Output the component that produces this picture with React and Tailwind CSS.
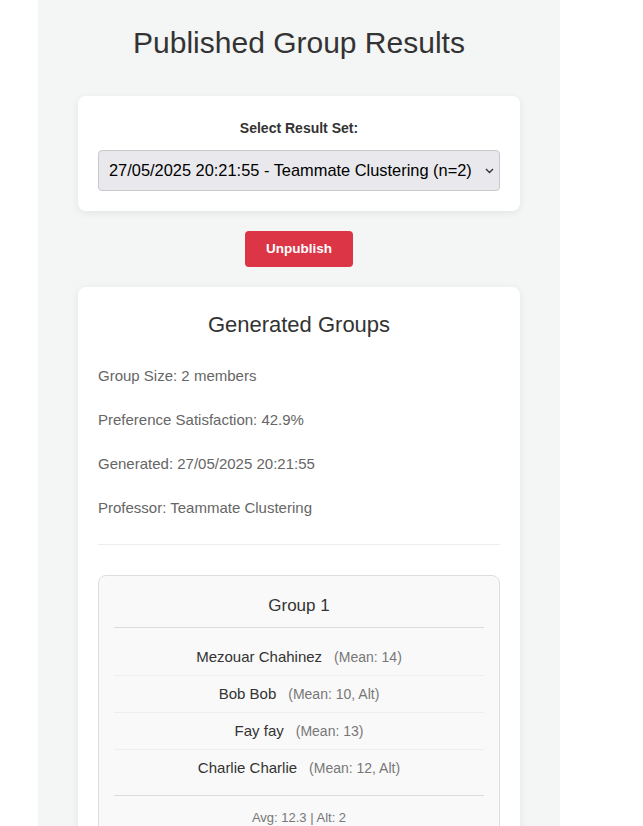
import { useState } from "react";

const RESULT_SETS = [
    "27/05/2025 20:21:55 - Teammate Clustering (n=2)",
];

const members = [
    { name: "Mezouar Chahinez", note: "(Mean: 14)" },
    { name: "Bob Bob", note: "(Mean: 10, Alt)" },
    { name: "Fay fay", note: "(Mean: 13)" },
    { name: "Charlie Charlie", note: "(Mean: 12, Alt)" },
];

const App = () => {
    const [selected, setSelected] = useState(RESULT_SETS[0]);

    return (
        <div className="min-h-screen bg-white font-['Liberation_Sans',Arial,sans-serif]">
            <div className="ml-[38px] w-[522px] min-h-[826px] bg-[#f4f5f5] px-10 pt-[21px] pb-10">
                {/* Title */}
                <h1 className="text-center text-[30px] leading-[44px] text-[#333]">
                    Published Group Results
                </h1>

                {/* Result set picker */}
                <div className="mt-[31px] rounded-lg bg-white px-5 pt-[22px] pb-5 shadow-[0_2px_8px_rgba(0,0,0,0.07)]">
                    <label className="block text-center text-[14px] font-bold leading-[20px] text-[#333]">
                        Select Result Set:
                    </label>
                    <div className="relative mt-[12px]">
                        <select
                            value={selected}
                            onChange={(e) => setSelected(e.target.value)}
                            className="block h-[41px] w-full appearance-none rounded-[4px] border border-[#c9c9cc] bg-[#e9e9ed] pl-[10px] pr-[18px] text-[16.4px] text-black outline-none">
                            {RESULT_SETS.map((s) => (
                                <option key={s} value={s}>
                                    {s}
                                </option>
                            ))}
                        </select>
                        <svg
                            className="pointer-events-none absolute right-[6px] top-[18px]"
                            width="9"
                            height="6"
                            viewBox="0 0 9 6"
                            fill="none">
                            <path
                                d="M1 1l3.5 3.5L8 1"
                                stroke="#333"
                                strokeWidth="1.4"
                            />
                        </svg>
                    </div>
                </div>

                {/* Unpublish */}
                <div className="mt-5 flex justify-center">
                    <button className="h-[36px] w-[108px] rounded-[4px] bg-[#dc3545] text-[13.5px] font-bold text-white">
                        Unpublish
                    </button>
                </div>

                {/* Generated groups */}
                <div className="mt-5 rounded-lg bg-white px-5 pt-[22px] pb-5 shadow-[0_2px_8px_rgba(0,0,0,0.07)]">
                    <h2 className="text-center text-[22px] leading-[32px] text-[#333]">
                        Generated Groups
                    </h2>

                    <div className="mt-[13px] flex flex-col text-[15px] leading-[44px] text-[#666]">
                        <p>Group Size: 2 members</p>
                        <p>Preference Satisfaction: 42.9%</p>
                        <p>Generated: 27/05/2025 20:21:55</p>
                        <p>Professor: Teammate Clustering</p>
                    </div>

                    <hr className="mt-[14px] border-0 border-t border-[#eee]" />

                    <div className="mt-[30px] rounded-lg border border-[#ddd] bg-[#f9f9f9] px-[15px] pt-5 pb-4">
                        <h3 className="border-b border-[#ddd] pb-[11px] text-center text-[17px] leading-[20px] text-[#333]">
                            Group 1
                        </h3>
                        <ul className="mt-[11px]">
                            {members.map((m, i) => (
                                <li
                                    key={m.name}
                                    className={`flex h-[37px] items-center justify-center text-[15px] text-[#333] ${
                                        i < members.length - 1
                                            ? "border-b border-[#eee]"
                                            : ""
                                    }`}>
                                    <span>{m.name}</span>
                                    <span className="ml-[12px] text-[14px] text-[#777]">
                                        {m.note}
                                    </span>
                                </li>
                            ))}
                        </ul>
                        <div className="mt-[8px] border-t border-[#ddd] pt-[13px] text-center text-[13px] leading-[18px] text-[#777]">
                            Avg: 12.3 | Alt: 2
                        </div>
                    </div>
                </div>
            </div>
        </div>
    );
};

export default App;
